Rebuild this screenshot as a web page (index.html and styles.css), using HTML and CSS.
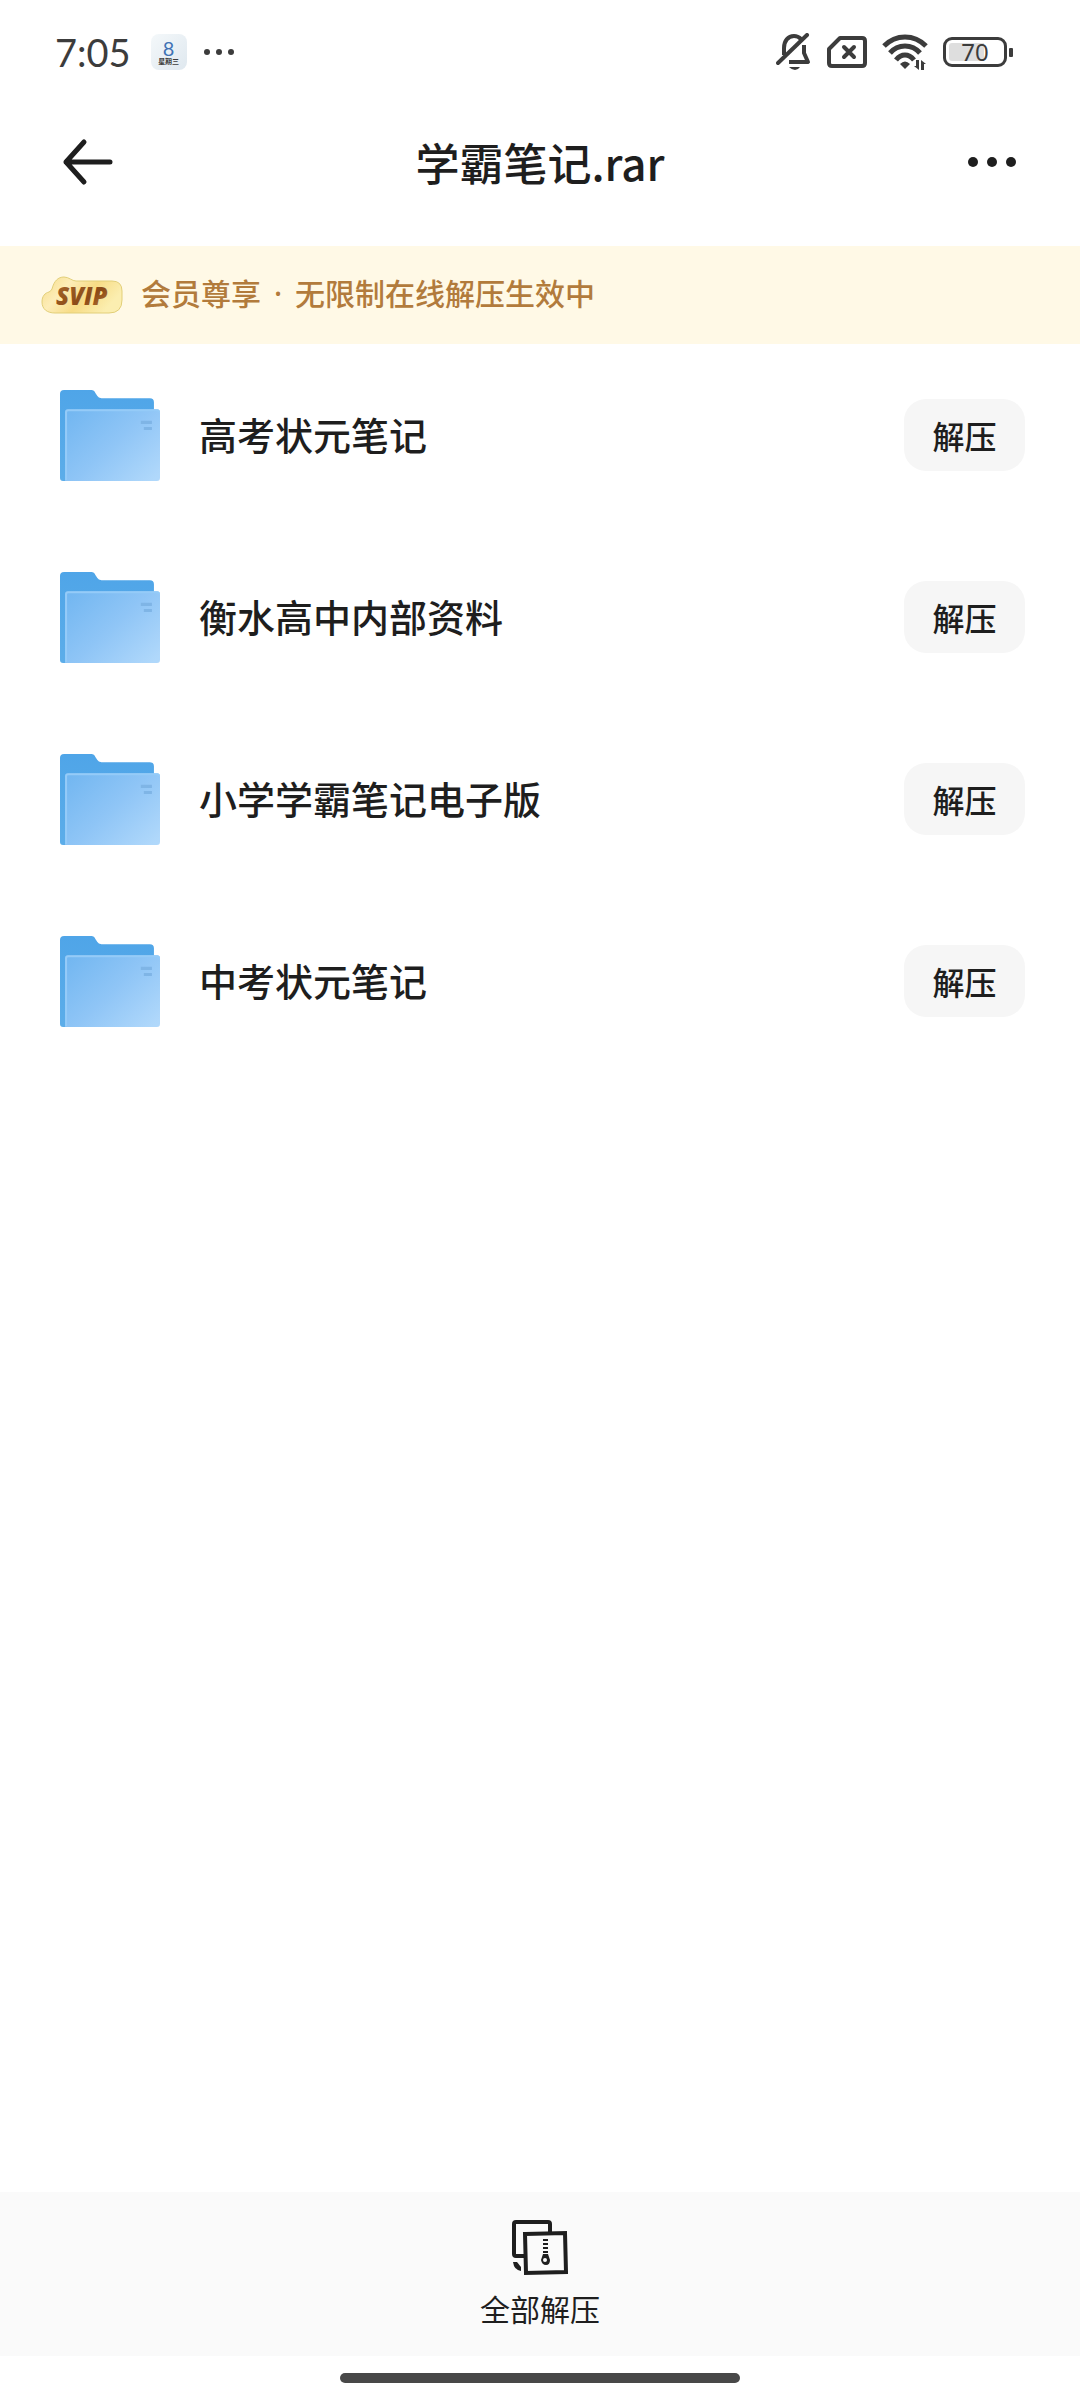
FILE: index.html
```html
<!DOCTYPE html>
<html lang="zh-CN">
<head>
  <meta charset="UTF-8">
  <meta name="viewport" content="width=device-width, initial-scale=1">
  <title>学霸笔记.rar</title>
  <link rel="stylesheet" href="styles.css">
</head>
<body>
  <!-- shared folder icon -->
  <svg class="defs" width="0" height="0" aria-hidden="true">
    <defs>
      <linearGradient id="back" x1="0" y1="0" x2="0" y2="1">
        <stop offset="0" stop-color="#4fa5e8"/>
        <stop offset="1" stop-color="#5cade9"/>
      </linearGradient>
      <linearGradient id="front" x1="0" y1="0.1" x2="1" y2="0.9">
        <stop offset="0" stop-color="#73b7f1"/>
        <stop offset="0.5" stop-color="#8fc5f6"/>
        <stop offset="1" stop-color="#b0d8fb"/>
      </linearGradient>
      <symbol id="folder" viewBox="0 0 100 92">
        <path d="M1 5q0-4 4-4h27q3 0 4 3l2 3q1 2 4 2h48q4 0 4 4v78H4q-3 0-3-3z" fill="url(#back)"/>
        <path d="M6 23q0-3 3-3h88q3 0 3 3v65q0 3-3 3H6z" fill="url(#front)"/>
        <path d="M7 90V23q0-2 2-2h88q2 0 2 2" fill="none" stroke="#95cbf8" stroke-width="2"/>
        <path d="M81 33h11M84 39h8" stroke="#7fb5e6" stroke-width="3"/>
      </symbol>
    </defs>
  </svg>

  <div class="status">
    <span class="time">7:05</span>
    <span class="date"><b>8</b><i>星期三</i></span>
    <svg class="dots" width="32" height="8" viewBox="0 0 32 8" fill="#3c3c3c">
      <circle cx="4" cy="4" r="3"/><circle cx="16" cy="4" r="3"/><circle cx="28" cy="4" r="3"/>
    </svg>
    <div class="status-icons">
      <svg width="36" height="38" viewBox="0 0 36 38" fill="none" stroke="#3c3c3c" stroke-width="4">
        <path d="M8 22v-7C8 8 12 3 18 3c3 0 5 1 7 3M28 12v8l4 9H13" stroke-linejoin="round"/>
        <path d="M2 30L31 2" stroke-linecap="round"/>
        <path d="M13 34h11q-2 3-5 3t-6-3z" fill="#3c3c3c" stroke="none"/>
      </svg>
      <svg width="40" height="32" viewBox="0 0 40 32" fill="none" stroke="#3c3c3c" stroke-width="4" stroke-linejoin="round">
        <path d="M13 2h22q3 0 3 3v22q0 3-3 3H5q-3 0-3-3V13z"/>
        <path d="M17 11l10 10M27 11L17 21" stroke-linecap="round"/>
      </svg>
      <svg width="46" height="36" viewBox="0 0 46 36" fill="none" stroke="#3c3c3c" stroke-width="5">
        <path d="M2 12Q11 3 23 3t21 9"/>
        <path d="M8 19q6-7 15-7t15 7"/>
        <path d="M14 26q4-5 9-5t9 5"/>
        <path d="M18 30q5-5 10 0l-5 5z" fill="#3c3c3c" stroke="none"/>
        <path d="M37 26v10l-5-4h2v-6zM39 36V26l5 4h-2v6z" fill="#3c3c3c" stroke="none"/>
      </svg>
      <div class="battery"><span>70</span></div>
    </div>
  </div>

  <header class="topbar">
    <button class="icon-btn" aria-label="返回">
      <svg width="52" height="48" viewBox="0 0 52 48" fill="none" stroke="#1e1e1e" stroke-width="5" stroke-linecap="round" stroke-linejoin="round">
        <path d="M48 24H4M22 4L4 24l18 20"/>
      </svg>
    </button>
    <h1>学霸笔记.rar</h1>
    <button class="icon-btn" aria-label="更多">
      <svg width="52" height="12" viewBox="0 0 52 12" fill="#1e1e1e">
        <circle cx="7" cy="6" r="5"/><circle cx="26" cy="6" r="5"/><circle cx="45" cy="6" r="5"/>
      </svg>
    </button>
  </header>

  <div class="banner">
    <svg width="82" height="38" viewBox="0 0 82 38">
      <defs>
        <linearGradient id="gold" x1="0" y1="0" x2="1" y2="0.4">
          <stop offset="0" stop-color="#f6dc86"/>
          <stop offset="0.35" stop-color="#fdedb8"/>
          <stop offset="0.65" stop-color="#f7dc86"/>
          <stop offset="1" stop-color="#fbeeb0"/>
        </linearGradient>
        <linearGradient id="brown" x1="0" y1="0" x2="1" y2="1">
          <stop offset="0" stop-color="#a9692c"/>
          <stop offset="0.6" stop-color="#8a4a17"/>
          <stop offset="1" stop-color="#c07a35"/>
        </linearGradient>
      </defs>
      <path d="M11 13C13 5 17 1 23 1c5 0 8 4 12 4h36q10 0 10 10v9q0 13-13 13H14C6 37 1 33 1 26c0-6 3-9 7-10q2-1 3-3z" fill="url(#gold)" stroke="#e2cf78" stroke-width="1"/>
      <text x="15" y="29" class="svip" fill="url(#brown)">SVIP</text>
    </svg>
    <p>会员尊享<span class="sep">·</span>无限制在线解压生效中</p>
  </div>

  <ul class="files">
    <li>
      <svg class="folder"><use href="#folder"/></svg>
      <span class="name">高考状元笔记</span>
      <button class="unzip">解压</button>
    </li>
    <li>
      <svg class="folder"><use href="#folder"/></svg>
      <span class="name">衡水高中内部资料</span>
      <button class="unzip">解压</button>
    </li>
    <li>
      <svg class="folder"><use href="#folder"/></svg>
      <span class="name">小学学霸笔记电子版</span>
      <button class="unzip">解压</button>
    </li>
    <li>
      <svg class="folder"><use href="#folder"/></svg>
      <span class="name">中考状元笔记</span>
      <button class="unzip">解压</button>
    </li>
  </ul>

  <footer class="bottom">
    <button class="unzip-all">
      <svg width="56" height="56" viewBox="0 0 56 56" fill="none" stroke="#1e1e1e" stroke-width="4">
        <path d="M12 36H4q-2 0-2-2V4q0-2 2-2h32q2 0 2 2v9" stroke-linejoin="round"/>
        <path d="M13 14l40-1 1 39-40 1z"/>
        <path d="M31 20h5M31 24h5M31 28h5M31 32h5" stroke-width="2"/>
        <path d="M31 34h5l2 6q0 5-4 5t-5-5z" fill="#1e1e1e" stroke="none"/>
        <circle cx="33" cy="40" r="2" fill="#fafafa" stroke="none"/>
        <path d="M1 42h4l4 5v4q-7-1-8-9z" fill="#1e1e1e" stroke="none"/>
      </svg>
      <span>全部解压</span>
    </button>
  </footer>
  <div class="home"></div>
</body>
</html>
```
FILE: styles.css
```css
* {
  box-sizing: border-box;
}

body {
  margin: 0;
  min-height: 100vh;
  display: flex;
  flex-direction: column;
  background: #fff;
  color: #1e1e1e;
  font-family: "Noto Sans CJK SC", sans-serif;
}

button {
  border: 0;
  padding: 0;
  background: none;
  color: inherit;
  font-family: inherit;
}

svg {
  display: block;
  flex: none;
}

.defs {
  position: absolute;
}

/* status bar */
.status {
  display: flex;
  align-items: center;
  height: 104px;
  padding: 0 73px 0 55px;
  color: #3c3c3c;
}

.time {
  font: 38px/40px Lato, sans-serif;
}

.date {
  display: flex;
  flex-direction: column;
  align-items: center;
  justify-content: center;
  width: 36px;
  height: 36px;
  margin: 0 16px 0 20px;
  border-radius: 8px;
  background: linear-gradient(135deg, #f4f8fa, #dfe8ef);
}

.date b {
  font: 20px/18px Lato, sans-serif;
  color: #3f73b5;
}

.date i {
  font-size: 7px;
  font-style: normal;
  font-weight: 700;
  line-height: 8px;
}

.status-icons {
  display: flex;
  align-items: center;
  gap: 15px;
  margin-left: auto;
}

.battery {
  position: relative;
  width: 64px;
  height: 30px;
  border: 3px solid #3c3c3c;
  border-radius: 9px;
  padding: 3px;
}

.battery span {
  display: block;
  height: 18px;
  border-radius: 3px;
  background: linear-gradient(90deg, #dedede 68%, transparent 68%);
  font: 24px/18px "Noto Sans", sans-serif;
  text-align: center;
}

.battery::after {
  content: "";
  position: absolute;
  right: -9px;
  top: 8px;
  width: 4px;
  height: 9px;
  border-radius: 1px;
  background: #3c3c3c;
}

/* title bar */
.topbar {
  display: flex;
  align-items: center;
  justify-content: space-between;
  height: 142px;
  padding: 0 62px 26px;
}

.topbar h1 {
  margin: 0;
  font-size: 44px;
  font-weight: 500;
  line-height: 60px;
}

.banner {
  display: flex;
  align-items: center;
  gap: 18px;
  height: 98px;
  padding: 0 41px;
  background: #fff9e6;
  color: #b27b3c;
  font-size: 30px;
  font-weight: 500;
  line-height: 40px;
}

.banner p {
  margin: 0;
  padding-bottom: 4px;
}

.banner .sep {
  display: inline-block;
  width: 34px;
  font-family: "Noto Sans", sans-serif;
  text-align: center;
}

.svip {
  font: italic 800 24px "Open Sans", sans-serif;
}

/* file list */
.files {
  margin: 0;
  padding: 0;
  list-style: none;
}

.files li {
  display: flex;
  align-items: center;
  height: 182px;
  padding: 0 55px 0 59px;
}

.folder {
  width: 101px;
  height: 93px;
}

.name {
  flex: 1;
  margin-left: 39px;
  padding-bottom: 2px;
  font-size: 38px;
  font-weight: 500;
  line-height: 56px;
}

.unzip {
  width: 121px;
  height: 72px;
  border-radius: 22px;
  background: #f6f6f6;
  font-size: 32px;
  font-weight: 500;
}

/* bottom bar */
.bottom {
  display: flex;
  justify-content: center;
  margin-top: auto;
  height: 164px;
  background: #fafafa;
}

.unzip-all {
  display: flex;
  flex-direction: column;
  align-items: center;
  gap: 12px;
  padding-top: 28px;
  font-size: 30px;
  line-height: 40px;
}

.home {
  width: 37%;
  height: 10px;
  margin: 17px auto;
  border-radius: 5px;
  background: #484848;
}
```
